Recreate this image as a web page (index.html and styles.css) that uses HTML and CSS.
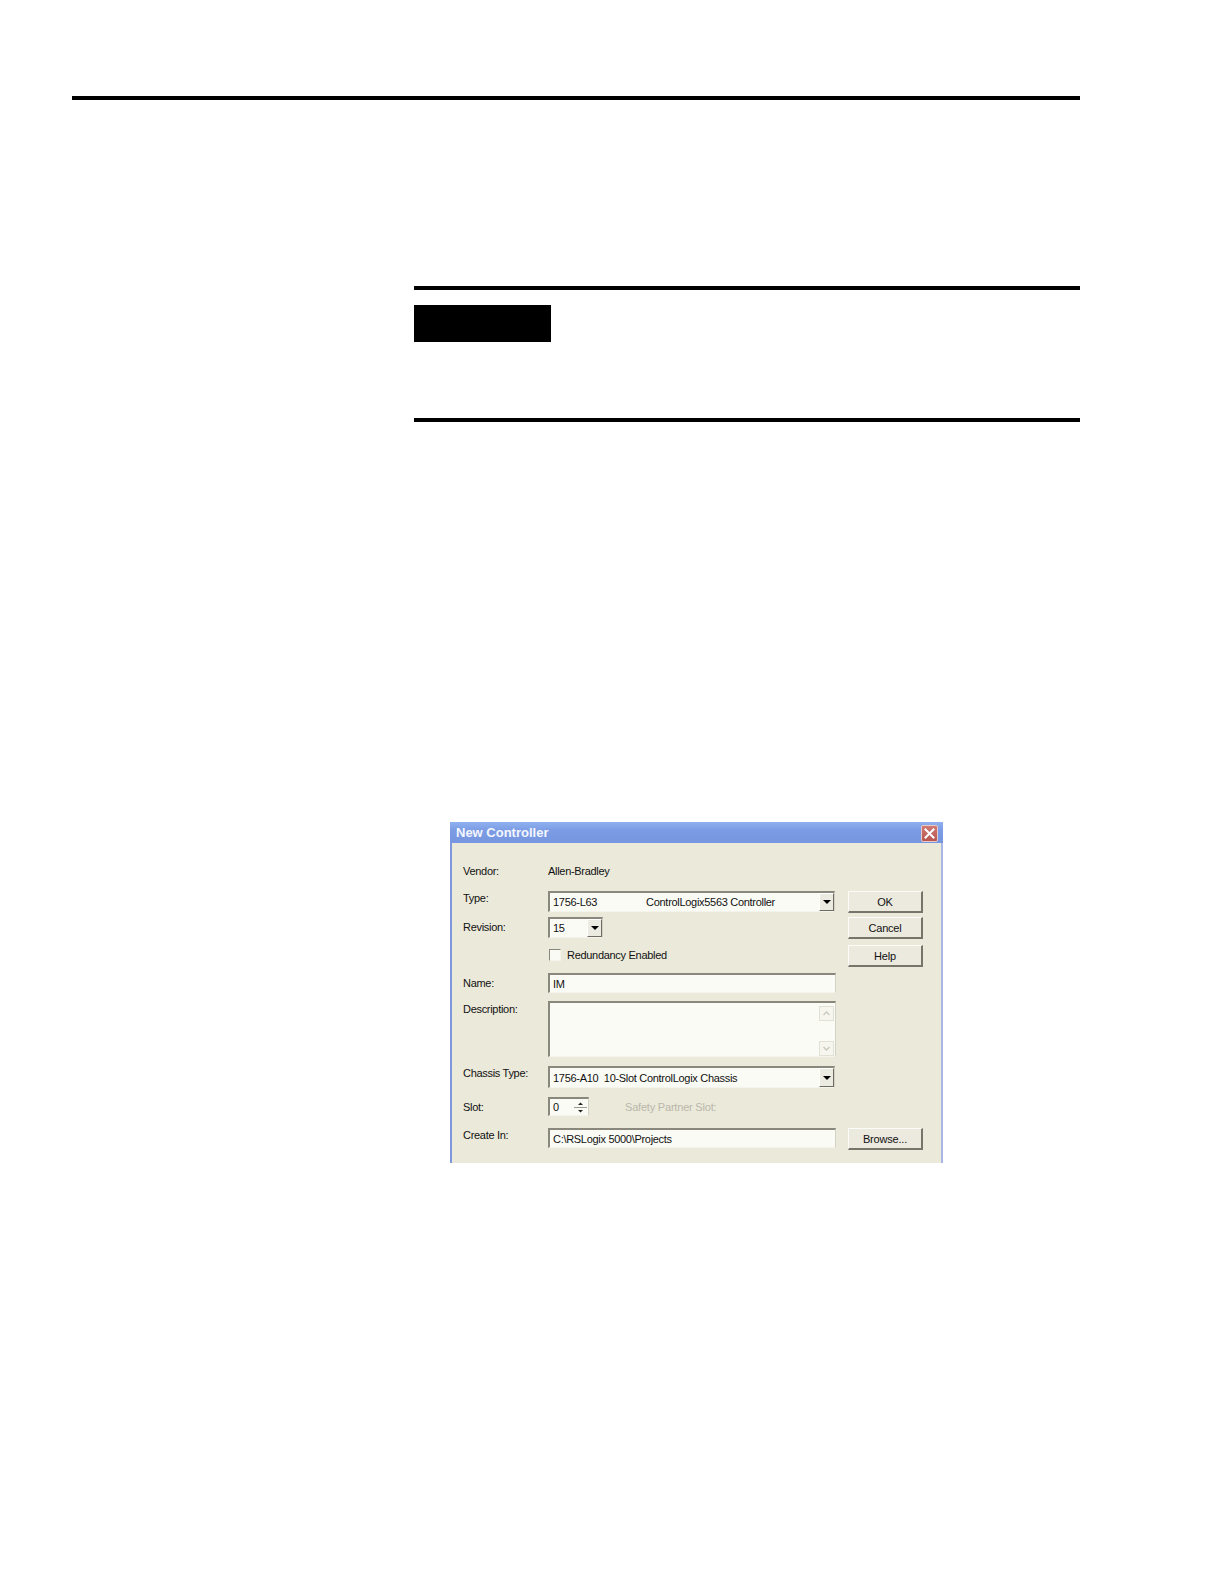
FILE: index.html
```html
<!DOCTYPE html>
<html lang="en">
  <head>
    <meta charset="UTF-8" />
    <meta name="viewport" content="width=device-width, initial-scale=1.0" />
    <title>New Controller</title>
    <link rel="stylesheet" href="styles.css">
  </head>
  <body>
    <div class="rule rule-top"></div>

    <section class="note">
      <div class="rule"></div>
      <div class="note-tag"></div>
      <div class="rule note-end"></div>
    </section>

    <div class="dialog">
      <div class="titlebar">
        <span>New Controller</span>
        <div class="close">
          <svg width="17" height="17" viewBox="0 0 17 17">
            <path d="M4.5 4.5 L12.5 12.5 M12.5 4.5 L4.5 12.5" stroke="#fff" stroke-width="2" stroke-linecap="square" />
          </svg>
        </div>
      </div>

      <div class="form">
        <!-- rad 1 -->
        <label class="lbl r1">Vendor:</label>
        <div class="plain r1">Allen-Bradley</div>

        <!-- rad 2 -->
        <label class="lbl r2 up">Type:</label>
        <div class="field combo r2">
          <span class="val">1756-L63</span>
          <span class="val desc-txt">ControlLogix5563 Controller</span>
          <span class="drop"><i></i></span>
        </div>
        <button class="btn r2">OK</button>

        <!-- rad 3 -->
        <label class="lbl r3">Revision:</label>
        <div class="field combo small r3">
          <span class="val">15</span>
          <span class="drop"><i></i></span>
        </div>
        <button class="btn r3">Cancel</button>

        <!-- rad 4 -->
        <div class="check r4"><span class="box"></span>Redundancy Enabled</div>
        <button class="btn r4">Help</button>

        <!-- rad 5 -->
        <label class="lbl r5">Name:</label>
        <div class="field r5"><span class="val">IM</span></div>

        <!-- rad 6 -->
        <label class="lbl r6">Description:</label>
        <div class="field area r6">
          <div class="scroll">
            <span class="sbtn">
              <svg width="13" height="13" viewBox="0 0 13 13"><path d="M3.5 8 L6.5 5 L9.5 8" fill="none" stroke="#c9c7ba" stroke-width="1.3" /></svg>
            </span>
            <span class="sbtn">
              <svg width="13" height="13" viewBox="0 0 13 13"><path d="M3.5 5 L6.5 8 L9.5 5" fill="none" stroke="#c9c7ba" stroke-width="1.3" /></svg>
            </span>
          </div>
        </div>

        <!-- rad 7 -->
        <label class="lbl r7 up">Chassis Type:</label>
        <div class="field combo r7">
          <span class="val">1756-A10&nbsp;&nbsp;10-Slot ControlLogix Chassis</span>
          <span class="drop"><i></i></span>
        </div>

        <!-- rad 8 -->
        <label class="lbl r8">Slot:</label>
        <div class="slot-row r8">
          <div class="field spin">
            <span class="val">0</span>
            <span class="spin-btns">
              <svg width="15" height="17" viewBox="0 0 15 17">
                <path d="M5 6 L7.5 3.5 L10 6 Z" fill="#222" />
                <path d="M1 8.5 H14" stroke="#9c9a8e" stroke-width="1" />
                <path d="M5 11 L7.5 13.5 L10 11 Z" fill="#222" />
              </svg>
            </span>
          </div>
          <span class="muted">Safety Partner Slot:</span>
        </div>

        <!-- rad 9 -->
        <label class="lbl r9 up">Create In:</label>
        <div class="field r9"><span class="val">C:\RSLogix 5000\Projects</span></div>
        <button class="btn r9">Browse...</button>
      </div>
    </div>
  </body>
</html>
```

FILE: styles.css
```css
* {
  margin: 0;
  padding: 0;
  box-sizing: border-box;
}

body {
  background-color: #fff;
  font-family: "Liberation Sans", Arial, sans-serif;
}

.rule {
  height: 4px;
  background-color: #000;
}

.rule-top {
  width: 1008px;
  margin: 96px 0 0 72px;
}

.note {
  width: 666px;
  margin: 186px 0 0 414px;
}

.note-tag {
  width: 137px;
  height: 37px;
  margin-top: 15px;
  background-color: #000;
}

.note-end {
  margin-top: 76px;
}

/* dialogen */
.dialog {
  width: 493px;
  margin: 400px 0 0 450px;
  background-color: #ebe9da;
}

.titlebar {
  height: 21px;
  display: flex;
  align-items: center;
  justify-content: space-between;
  padding: 0 5px 0 6px;
  background: linear-gradient(#8fb0ef, #7b9ce4 40%, #7696e0);
  color: #f4f6fd;
  font-weight: bold;
  font-size: 13px;
}

.close {
  width: 17px;
  height: 17px;
  margin-top: 1px;
  border: 1px solid #e8c9c9;
  border-radius: 2px;
  background: linear-gradient(#cf7a74, #b9554f);
}

.close svg {
  display: block;
  margin: -1px;
}

.form {
  display: grid;
  grid-template-columns: 85px 288px 12px 75px;
  grid-template-rows: 30px 26px 28px 28px 28px 65px 31px 31px 20px;
  align-items: start;
  padding: 18px 0 15px 11px;
  border-left: 2px solid #7f98dc;
  border-right: 2px solid #a9b6e6;
  font-size: 11px;
  letter-spacing: -0.3px;
  color: #111;
}

.r1 { grid-row: 1; }
.r2 { grid-row: 2; }
.r3 { grid-row: 3; }
.r4 { grid-row: 4; }
.r5 { grid-row: 5; }
.r6 { grid-row: 6; }
.r7 { grid-row: 7; }
.r8 { grid-row: 8; }
.r9 { grid-row: 9; }

.lbl {
  grid-column: 1;
  line-height: 20px;
}

.lbl.up {
  margin-top: -3px;
}

.lbl.r6 {
  line-height: 16px;
}

.plain {
  grid-column: 2;
  line-height: 20px;
}

.field {
  grid-column: 2;
  height: 20px;
  display: flex;
  align-items: center;
  background-color: #fbfbf5;
  border-top: 2px solid #8a887c;
  border-left: 2px solid #8a887c;
  border-right: 1px solid #d4d2c6;
  border-bottom: 1px solid #f4f3ec;
  position: relative;
}

.combo {
  height: 21px;
  width: 287px;
}

.r7.combo {
  height: 22px;
}

.combo.small {
  width: 55px;
}

.val {
  padding-left: 3px;
  white-space: nowrap;
}

.desc-txt {
  margin-left: 46px;
}

.drop {
  position: absolute;
  right: 0;
  top: 0;
  bottom: 0;
  width: 15px;
  background-color: #ecebe1;
  border-top: 1px solid #fff;
  border-left: 1px solid #fff;
  border-right: 1px solid #6f6d62;
  border-bottom: 1px solid #6f6d62;
  display: flex;
  align-items: center;
  justify-content: center;
}

.drop i {
  width: 0;
  height: 0;
  border-left: 4px solid transparent;
  border-right: 4px solid transparent;
  border-top: 4px solid #000;
}

.area {
  height: 56px;
}

.scroll {
  position: absolute;
  right: 1px;
  top: 3px;
  bottom: 0;
  width: 15px;
  display: flex;
  flex-direction: column;
  justify-content: space-between;
}

.sbtn {
  width: 15px;
  height: 15px;
  border: 1px solid #e2e1d6;
  background-color: #f6f5ee;
  display: flex;
  align-items: center;
  justify-content: center;
}

.check {
  grid-column: 2;
  display: flex;
  align-items: center;
  gap: 6px;
  margin-top: 3px;
  line-height: 14px;
}

.box {
  width: 12px;
  height: 12px;
  margin-left: 1px;
  background-color: #fbfbf5;
  border-top: 1px solid #8a887c;
  border-left: 1px solid #8a887c;
  border-right: 1px solid #f4f3ec;
  border-bottom: 1px solid #f4f3ec;
}

.slot-row {
  grid-column: 2;
  display: flex;
  align-items: center;
  gap: 36px;
}

.spin {
  width: 41px;
  height: 19px;
}

.spin-btns {
  position: absolute;
  right: 0;
  top: -1px;
  width: 16px;
  height: 18px;
  display: flex;
  align-items: center;
  justify-content: center;
}

.muted {
  color: #b9b7ab;
  letter-spacing: -0.2px;
}

.btn {
  grid-column: 4;
  height: 22px;
  font-family: inherit;
  font-size: 11px;
  letter-spacing: -0.2px;
  color: #111;
  background-color: #eceadf;
  border-top: 1px solid #fbfbf7;
  border-left: 1px solid #fbfbf7;
  border-right: 2px solid #77756a;
  border-bottom: 2px solid #77756a;
}
```
